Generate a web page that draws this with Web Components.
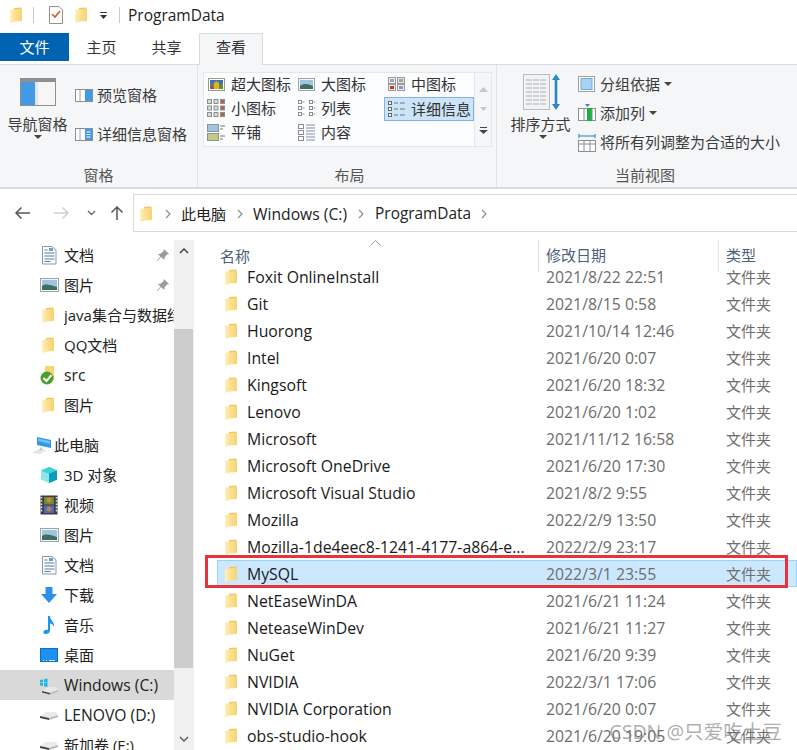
<!DOCTYPE html>
<html lang="zh"><head><meta charset="utf-8"><title>ProgramData</title>
<style>
html,body{margin:0;padding:0;height:750px;overflow:hidden;background:#fff;}
body{font:15px/20px "Open Sans","Noto Sans CJK SC",sans-serif;color:#1a1a1a;position:relative;display:flex;flex-direction:column;}
</style></head><body>
<x-titlebar>ProgramData</x-titlebar>
<x-tabs></x-tabs>
<x-ribbon></x-ribbon>
<x-address></x-address>
<x-body>
  <x-nav slot="nav">
    <x-nav-item icon="doc" pin>文档</x-nav-item>
    <x-nav-item icon="pic" pin>图片</x-nav-item>
    <x-nav-item icon="folder">java集合与数据结构</x-nav-item>
    <x-nav-item icon="folder">QQ文档</x-nav-item>
    <x-nav-item icon="src" latin>src</x-nav-item>
    <x-nav-item icon="folder" gap>图片</x-nav-item>
    <x-nav-item icon="pc" top>此电脑</x-nav-item>
    <x-nav-item icon="cube">3D 对象</x-nav-item>
    <x-nav-item icon="film">视频</x-nav-item>
    <x-nav-item icon="pic">图片</x-nav-item>
    <x-nav-item icon="doc">文档</x-nav-item>
    <x-nav-item icon="down">下载</x-nav-item>
    <x-nav-item icon="music">音乐</x-nav-item>
    <x-nav-item icon="desk">桌面</x-nav-item>
    <x-nav-item icon="winc" active latin>Windows (C:)</x-nav-item>
    <x-nav-item icon="disk" latin>LENOVO (D:)</x-nav-item>
    <x-nav-item icon="disk">新加卷 (E:)</x-nav-item>
  </x-nav>
  <x-list slot="list">
    <x-file date="2021/8/22 22:51">Foxit OnlineInstall</x-file>
    <x-file date="2021/8/15 0:58">Git</x-file>
    <x-file date="2021/10/14 12:46">Huorong</x-file>
    <x-file date="2021/6/20 0:07">Intel</x-file>
    <x-file date="2021/6/20 18:32">Kingsoft</x-file>
    <x-file date="2021/6/20 1:02">Lenovo</x-file>
    <x-file date="2021/11/12 16:58">Microsoft</x-file>
    <x-file date="2021/6/20 17:30">Microsoft OneDrive</x-file>
    <x-file date="2021/8/2 9:55">Microsoft Visual Studio</x-file>
    <x-file date="2022/2/9 13:50">Mozilla</x-file>
    <x-file date="2022/2/9 23:17">Mozilla-1de4eec8-1241-4177-a864-e...</x-file>
    <x-file date="2022/3/1 23:55" selected>MySQL</x-file>
    <x-file date="2021/6/21 11:24">NetEaseWinDA</x-file>
    <x-file date="2021/6/21 11:27">NeteaseWinDev</x-file>
    <x-file date="2021/6/20 9:39">NuGet</x-file>
    <x-file date="2022/3/1 17:06">NVIDIA</x-file>
    <x-file date="2021/6/20 0:07">NVIDIA Corporation</x-file>
    <x-file date="2021/6/20 19:05">obs-studio-hook</x-file>
  </x-list>
</x-body>
<x-watermark>CSDN @只爱吃土豆</x-watermark>
<script>
const grad='<defs><linearGradient id="f" x1="0" x2="1" y1="0" y2="0"><stop offset="0" stop-color="#fff2c4"/><stop offset=".3" stop-color="#fde49c"/><stop offset="1" stop-color="#f8d272"/></linearGradient></defs>';
const ICONS={
folder:[16,18,`${grad}<path d="M5 2 L12.500 1.500 V15 H5Z" fill="#f2c65e"/><path d="M1 3.500 H6 L8 3 H13 V15 L6 15.500 L1 17Z" fill="url(#f)"/>`],
doc:[18,20,`<path d="M2.5 1.5H12L16 5V19H2.5Z" fill="#fdfdfd" stroke="#8a99a8"/><path d="M4.5 5h3M4.5 8h10M4.5 11h10M4.5 14h10M4.5 16.5h6" stroke="#4f7ea8"/><rect x="9" y="3" width="4" height="3" fill="#6aa2cf"/>`],
pic:[19,14,`<rect x=".5" y=".5" width="18" height="13" fill="#f4f5f6" stroke="#9aa5ae"/><rect x="2" y="2" width="15" height="10" fill="#9fc4dd"/><path d="M2 8C6 5 10 7 17 9V12H2Z" fill="#3d6e5f"/>`],
src:[20,20,`<path d="M6 1h9v14H6Z" fill="#f8d574"/><circle cx="8" cy="13" r="6.5" fill="#4aa02c"/><path d="M4.5 13l3 3 5-6" fill="none" stroke="#fff" stroke-width="2"/>`],
pc:[22,20,`<path d="M7 2 L21 5 V13 L7 10Z" fill="#2e9be6"/><path d="M8 3.5L20 6V9L8 6Z" fill="#71c1f2"/><path d="M2 18 L9 14 L17 15 L10 19Z" fill="#e3e6e8"/><path d="M11 12l2 3h-4z" fill="#c3c9cd"/>`],
cube:[18,18,`<path d="M9 1 L17 4.5 V13.5 L9 17Z" fill="#0f9fb8"/><path d="M9 1 L1 4.5 V13.5 L9 17Z" fill="#8fe6e6"/><path d="M1 4.5 L9 1 L17 4.5 L9 8Z" fill="#3fd0d6"/><path d="M9 8V17L17 13.5V4.5Z" fill="#0c9bbd"/>`],
film:[18,20,`<rect x=".5" y=".5" width="17" height="19" fill="#3d3d3d"/><rect x="4" y="2" width="10" height="7.5" fill="#6c8a3f"/><rect x="4" y="10.5" width="10" height="7.5" fill="#4a68c7"/><circle cx="9" cy="5" r="2.5" fill="#d8862c"/><circle cx="9" cy="14" r="2.5" fill="#c0813a"/><path d="M1.5 2v16M16.5 2v16" stroke="#ddd" stroke-width="1.6" stroke-dasharray="1.6 1.6"/>`],
down:[18,18,`<path d="M5.5 1H12.5V8H17L9 17 1 8H5.5Z" fill="#2e8ee8"/>`],
music:[14,20,`<path d="M6 1H8C8.5 6 13 7 12 12 11 9 9.500 8.500 8 8.500V15.500C8 18 5.500 19 3.500 19 1.500 19 1 17.500 1.500 16.500 2.500 14.500 5 14.500 6 15Z" fill="#1b94ea"/>`],
desk:[18,14,`<rect x=".5" y=".5" width="17" height="13" fill="#1e90f0" stroke="#0f6ec4"/><path d="M3 12.500h1M6 12.500h1M9 12.500h6" stroke="#cfe7ff"/>`],
winc:[20,20,`<path d="M1 5l3-.5v3H1zM5 4.300L8.500 3.500v4H5zM1 8h3v3l-3-.5zM5 8h3.500v4L5 11.200z" fill="#1fb5e6"/><path d="M3 16 L9 12 H18 L19 15 L11 18Z" fill="#e6e8ea"/><path d="M3 16 L11 18 L11 19.500 L3 17.500Z" fill="#3f3f3f"/><path d="M11 18 L19 15 V16.500 L11 19.500Z" fill="#b5b8bb"/>`],
disk:[20,14,`<path d="M1 8 L7 4 H17 L19 7 L10 10Z" fill="#e8eaec"/><path d="M1 8 L10 10 V12 L1 10Z" fill="#444"/><path d="M10 10 L19 7 V9 L10 12Z" fill="#b5b8bb"/>`],
pane1:[36,28,`<rect x=".5" y=".5" width="35" height="27" fill="#f6f6f6" stroke="#8f8f8f"/><rect x="1" y="1" width="34" height="3" fill="#8f8f8f"/><rect x="1" y="4" width="14" height="23" fill="#429ae6"/><rect x="15" y="4" width="3" height="23" fill="#dfe8f1"/>`],
pane2:[18,13,`<rect x=".5" y=".5" width="17" height="12" fill="#fff" stroke="#8a8f94"/><rect x="10" y="1" width="7" height="11" fill="#429ae6"/><path d="M5 1v11" stroke="#9a9fa4"/>`],
pane3:[18,13,`<rect x=".5" y=".5" width="17" height="12" fill="#fff" stroke="#8a8f94"/><rect x="10" y="1" width="7" height="11" fill="#429ae6"/><path d="M5 1v11" stroke="#9a9fa4"/><path d="M11.500 4h4M11.500 6.500h4M11.500 9h4" stroke="#fff"/>`],
xl:[17,13,`<rect x=".5" y=".5" width="16" height="12" fill="#fff" stroke="#9a9a8a"/><rect x="2" y="2" width="13" height="9" fill="#5d8f3b"/><rect x="2" y="2" width="13" height="4" fill="#4a6fb0"/><path d="M6 11V5l2.500-2L11 5v6z" fill="#e0b21e"/><rect x="2" y="8" width="3" height="3" fill="#c23a7a"/>`],
lg:[17,13,`<rect x=".5" y=".5" width="16" height="12" fill="#f4f5f6" stroke="#9aa5ae"/><rect x="2" y="2" width="13" height="9" fill="#9fc4dd"/><path d="M2 8C6 5 10 6 15 8V11H2Z" fill="#3d6e5f"/>`],
md:[17,14,`<rect x=".5" y=".5" width="7" height="6" fill="#eee" stroke="#9a9a9a"/><rect x="9.500" y=".5" width="7" height="6" fill="#dfe6d8" stroke="#9a9a9a"/><rect x=".5" y="7.500" width="7" height="6" fill="#eee" stroke="#9a9a9a"/><rect x="9.500" y="7.500" width="7" height="6" fill="#eee" stroke="#9a9a9a"/><rect x="2" y="9" width="4" height="3" fill="#c9352a"/><rect x="11" y="9" width="4" height="3" fill="#8b93c9"/><rect x="2" y="2" width="4" height="3" fill="#9aa"/><rect x="11" y="2" width="4" height="3" fill="#9a8"/>`],
sm:[18,18,[0,6.5,13].flatMap(y=>[0,6.5,13].map(x=>`<rect x="${x+.5}" y="${y+.5}" width="4" height="4" fill="${x==13?'#b5654a':'#d5dbd0'}" stroke="#8d8d8d"/>`)).join('')],
list:[17,16,[0,6,12].flatMap(y=>[0,11].flatMap(x=>[`<rect x="${x+.5}" y="${y+.5}" width="3" height="3" fill="#fff" stroke="#8d8d8d"/>`,`<path d="M${x+4.500} ${y+2}h2" stroke="#8d8d8d"/>`])).join('')],
detail:[17,16,[0,6,12].map(y=>`<rect x=".5" y="${y+.5}" width="3" height="3" fill="#fff" stroke="#666"/><path d="M6 ${y+2}h4M12 ${y+2}h5" stroke="#777"/>`).join('')],
tile:[18,17,`<rect x=".5" y=".5" width="11" height="7" fill="#9fc4dd" stroke="#8d9499"/><rect x=".5" y="9.500" width="11" height="7" fill="#c7c78a" stroke="#8d9499"/><path d="M13 2h5M13 5h3M13 12h5M13 15h3" stroke="#777"/>`],
content:[17,17,[0,6,12].map(y=>`<rect x=".5" y="${y+.5}" width="5" height="4" fill="#fff" stroke="#8d8d8d"/><path d="M8 ${y+1}h9M8 ${y+4}h9" stroke="#7f8fb0"/>`).join('')],
group:[17,16,`<rect x=".5" y=".5" width="16" height="15" fill="#fff" stroke="#9a9fa4"/><rect x="3" y="2.500" width="11" height="11" fill="#a8d2f2" stroke="#6faad8"/>`],
addcol:[18,18,`<rect x=".5" y="4.500" width="17" height="12" fill="#fff" stroke="#8a8f94"/><rect x="9" y="4" width="5" height="13" fill="#17b13d"/><path d="M6 5v11M14 5v11" stroke="#8a8f94"/><path d="M9.500 0l2.500 3H7z" fill="#4a7fb5" transform="rotate(180 9.500 1.500)"/>`],
fit:[18,20,`<path d="M1 2v4M17 2v4M1 4h16" stroke="#1e7fd0"/><rect x=".5" y="8.500" width="17" height="11" fill="#fff" stroke="#8a8f94"/><path d="M1 12h16M6 9v10M12 9v10" stroke="#8a8f94"/>`],
sort:[38,36,`<rect x=".5" y=".5" width="26" height="35" fill="#f1f2f3" stroke="#b8bcc0"/><path d="M3 6h21M3 10h21M3 14h21M3 18h21M3 22h21M3 26h21M3 30h21" stroke="#aab2ba" stroke-dasharray="6 1"/><path d="M33 3V33" stroke="#2f86c9" stroke-width="2.600"/><path d="M33 0l4 6h-8zM33 36l-4-6h8z" fill="#2f86c9"/>`],
check:[14,18,`<path d="M.5.5H10L13.500 4V17.500H.5Z" fill="#fff" stroke="#9a8f86"/><path d="M3 8l3 3 5-6" fill="none" stroke="#cf5a2c" stroke-width="1.600"/>`],
pin:[14,14,`<path d="M8 1l5 5-2 .5-2.500 3-.2 2.500L5 9 1.500 13 1 12.500 4.500 8.500 2 6l2.500-.2 3-2.500z" fill="#9a9a9a"/>`],
};
class XIcon extends HTMLElement{connectedCallback(){const[w,h,s]=ICONS[this.getAttribute('name')];
 const r=this.shadowRoot||this.attachShadow({mode:'open'});
 r.innerHTML=`<style>:host{display:inline-flex;flex:none;width:${w}px;height:${h}px}svg{display:block}</style><svg width="${w}" height="${h}" viewBox="0 0 ${w} ${h}">${s}</svg>`;}}
customElements.define('x-icon',XIcon);
const def=(n,html)=>customElements.define(n,class extends HTMLElement{connectedCallback(){if(this.shadowRoot)return;const r=this.attachShadow({mode:'open'});r.innerHTML=typeof html=='function'?html(this):html;}});
const caret=`<svg width="8" height="4" viewBox="0 0 8 4" style="display:block"><path d="M0 0h8L4 4z" fill="#444"/></svg>`;
function chev(){return `<svg width="6" height="10" viewBox="0 0 6 10"><path d="M1 1l4 4-4 4" fill="none" stroke="#888" stroke-width="1.100"/></svg>`}
def('x-titlebar',`<style>:host{display:flex;align-items:center;height:33px;flex:none;color:#222;box-sizing:border-box;padding-bottom:3px;font-size:15.5px}
.s{width:1px;height:16px;background:#c9c9c9}</style>
<x-icon name="folder" style="margin-left:9px"></x-icon><span class="s" style="margin-left:8px"></span>
<x-icon name="check" style="margin-left:15px"></x-icon><x-icon name="folder" style="margin-left:11px"></x-icon>
<span style="margin-left:10px;display:flex;flex-direction:column;gap:2px;align-items:center"><i style="width:7px;height:1px;background:#333;display:block"></i><svg width="7" height="4" viewBox="0 0 7 4" style="display:block"><path d="M0 0h7L3.500 4z" fill="#333"/></svg></span>
<span class="s" style="margin-left:12px"></span><span style="margin-left:8px"><slot></slot></span>`);
def('x-tabs',`<style>:host{display:flex;height:32px;flex:none;box-sizing:border-box;border-bottom:1px solid #dadbdc}
div{width:65px;height:31px;text-align:center;line-height:28px;color:#333;box-sizing:border-box}
.f{width:69px;height:28px;background:#0063b1;color:#fff}
.a{width:64px;height:32px;background:#f5f6f7;border:1px solid #dadbdc;border-bottom:0;line-height:27px}</style>
<div class="f">文件</div><div>主页</div><div>共享</div><div class="a">查看</div>`);
def('x-ribbon',`<style>:host{display:flex;height:124px;flex:none;background:#f5f6f7;border-bottom:2px solid #dadbdc;box-sizing:border-box;color:#3a3a3a;font-size:15px}
.g{display:flex;flex-direction:column;border-right:1px solid #e2e3e4;box-sizing:border-box;flex:none}
.c{flex:1;display:flex;min-height:0}
.l{height:24px;text-align:center;line-height:24px;color:#555}
.big{display:flex;flex-direction:column;align-items:center;flex:none}
.big span{white-space:nowrap}
.big svg{margin-top:1px}
.col{display:flex;flex-direction:column}
.it{display:flex;align-items:center;white-space:nowrap;gap:4px}
.gal{margin:7px 0 0 5px;width:272px;height:75px;background:#fbfcfe;border:1px solid #e6e7e8;box-sizing:border-box;display:grid;grid-template-columns:90px 90px 90px;grid-template-rows:24px 24px 24px;color:#333}
.gi{display:flex;align-items:center;gap:6px;padding-left:3px;padding-bottom:2px;white-space:nowrap;box-sizing:border-box}
.gi x-icon{width:18px;justify-content:center;align-self:center}
.sel{background:#cce4f7;border:1px solid #84b4dd;width:90px;padding-left:2px;padding-bottom:1px}
.sb{margin-top:7px;width:17px;height:75px;background:#f5f6f7;border:1px solid #e6e7e8;border-left:0;box-sizing:border-box;display:flex;flex-direction:column;align-items:center;justify-content:space-around;padding:6px 0 4px}
</style>
<div class="g" style="width:198px"><div class="c">
 <div class="big" style="width:75px;padding-top:13px;box-sizing:border-box"><x-icon name="pane1"></x-icon><span style="margin-top:8px">导航窗格</span>${caret}</div>
 <div class="col" style="padding-top:20px;gap:19px"><div class="it"><x-icon name="pane2"></x-icon>预览窗格</div><div class="it"><x-icon name="pane3"></x-icon>详细信息窗格</div></div>
</div><div class="l">窗格</div></div>
<div class="g" style="width:299px"><div class="c">
 <div class="gal">
  <div class="gi"><x-icon name="xl"></x-icon>超大图标</div><div class="gi"><x-icon name="lg"></x-icon>大图标</div><div class="gi"><x-icon name="md"></x-icon>中图标</div>
  <div class="gi"><x-icon name="sm"></x-icon>小图标</div><div class="gi"><x-icon name="list"></x-icon>列表</div><div class="gi sel"><x-icon name="detail"></x-icon>详细信息</div>
  <div class="gi"><x-icon name="tile"></x-icon>平铺</div><div class="gi"><x-icon name="content"></x-icon>内容</div><div></div>
 </div>
 <div class="sb"><svg width="9" height="5"><path d="M0 5h9L4.500 0z" fill="#c4c8cc"/></svg><svg width="7" height="4"><path d="M0 0h7L3.500 4z" fill="#c4c8cc"/></svg><svg width="9" height="7"><path d="M1 0h7v1H1zM0 3h9L4.500 7z" fill="#3a4a5a"/></svg></div>
</div><div class="l" style="padding-left:5px">布局</div></div>
<div class="g" style="flex:1;border-right:0"><div class="c">
 <div class="big" style="width:75px;margin-left:6px;padding-top:9px;box-sizing:border-box"><x-icon name="sort" style="margin-left:2px"></x-icon><span style="margin-top:4px">排序方式</span><svg width="8" height="4" viewBox="0 0 8 4" style="display:block;margin-left:4px"><path d="M0 0h8L4 4z" fill="#444"/></svg></div>
 <div class="col" style="padding-top:9px;gap:9px">
  <div class="it"><x-icon name="group" style="margin-right:1px"></x-icon>分组依据 ${caret}</div>
  <div class="it"><x-icon name="addcol"></x-icon>添加列 ${caret}</div>
  <div class="it"><x-icon name="fit"></x-icon>将所有列调整为合适的大小</div>
 </div>
</div><div class="l" style="margin-right:4px">当前视图</div></div>`);
def('x-address',`<style>:host{display:flex;height:51px;flex:none;align-items:flex-start;padding-top:5px;box-sizing:border-box;color:#222}
.n{display:flex;align-items:center;height:38px;width:133px;flex:none}
.box{flex:1;height:38px;border:1px solid #d9d9d9;border-right:0;display:flex;align-items:center;padding:1px 0 0 5px;box-sizing:border-box}
.c{display:flex;justify-content:center;flex:none}
.l{font-size:15.7px}
</style><div class="n">
<svg width="17" height="14" style="margin-left:14px" viewBox="0 0 17 14"><path d="M16 7H2M7.500 1.500 2 7l5.500 5.500" fill="none" stroke="#555" stroke-width="1.500"/></svg>
<svg width="17" height="14" style="margin-left:22px" viewBox="0 0 17 14"><path d="M1 7h14M9.500 1.500 15 7l-5.500 5.500" fill="none" stroke="#d0d0d0" stroke-width="1.500"/></svg>
<svg width="9" height="6" style="margin-left:17px" viewBox="0 0 9 6"><path d="M1 1l3.500 3.500L8 1" fill="none" stroke="#666" stroke-width="1.300"/></svg>
<svg width="14" height="16" style="margin-left:14px" viewBox="0 0 14 16"><path d="M7 15V2M1.500 7.500 7 2l5.500 5.500" fill="none" stroke="#555" stroke-width="1.500"/></svg></div>
<div class="box"><x-icon name="folder"></x-icon><span class="c" style="width:26px">${chev()}</span><span>此电脑</span><span class="c" style="width:27px">${chev()}</span><span class="l">Windows (C:)</span><span class="c" style="width:28px">${chev()}</span><span style="font-size:15.4px">ProgramData</span><span class="c" style="width:26px">${chev()}</span></div>`);
def('x-body',`<style>:host{display:flex;flex:1;min-height:0;overflow:hidden}</style><slot name="nav"></slot><slot name="list"></slot>`);
def('x-nav',`<style>:host{display:flex;width:194px;flex:none;height:510px;overflow:hidden;border-right:1px solid #f0f0f0;box-sizing:border-box}
.t{width:174px;flex:none;overflow:hidden}
.sb{width:19px;flex:none;background:#f0f0f0;display:flex;flex-direction:column;align-items:center}
.u{height:21px;display:flex;align-items:center;justify-content:center}
.th{width:19px;height:339px;background:#cdcdcd;margin-top:68px}
.d{margin-top:auto;height:22px;display:flex;align-items:center}
</style><div class="t"><slot></slot></div><div class="sb"><div class="u"><svg width="10" height="6" viewBox="0 0 10 6"><path d="M1 5l4-4 4 4" fill="none" stroke="#333" stroke-width="1.300"/></svg></div><div class="th"></div><div class="d"><svg width="10" height="6" viewBox="0 0 10 6"><path d="M1 1l4 4 4-4" fill="none" stroke="#555" stroke-width="1.300"/></svg></div></div>`);
def('x-nav-item',e=>{const top=e.hasAttribute('top');const nm=e.getAttribute('icon');
 return `<style>:host{display:flex;align-items:center;height:30px;white-space:nowrap;color:#222;${e.hasAttribute('latin')?'font-size:15.7px;':''}${e.hasAttribute('active')?'background:#d9d9d9;':''}${e.hasAttribute('gap')?'margin-bottom:10px;':''}overflow:hidden}
.ic{width:${top?22:20}px;margin-left:${top?30:39}px;display:flex;justify-content:center;flex:none}
.tx{margin-left:${top?2:5}px;flex:1;overflow:hidden}
.p{flex:none;margin:0 4px;display:flex}</style><span class="ic"><x-icon name="${nm}"></x-icon></span><span class="tx"><slot></slot></span>${e.hasAttribute('pin')?'<span class="p"><x-icon name="pin"></x-icon></span>':''}`});
def('x-list',`<style>:host{display:block;flex:1;min-width:0;height:510px;overflow:hidden}
.h{display:flex;height:24px;color:#4c607a;margin-bottom:-1px}
.n{width:344px;padding-left:26px;box-sizing:border-box;display:flex;flex-direction:column;line-height:20px}
.a{height:7px;display:flex;justify-content:center;padding-right:8px;align-items:center}
.dv{width:1px;height:32px;background:#e5e5e5;flex:none}
.d{width:179px;padding:5px 0 0 7px;box-sizing:border-box}
.t{padding:5px 0 0 7px}
</style><div class="h"><div class="n"><span class="a"><svg width="11" height="6" viewBox="0 0 11 6"><path d="M.5 5.500l5-5 5 5" fill="none" stroke="#999"/></svg></span><span>名称</span></div><span class="dv"></span><div class="d">修改日期</div><span class="dv"></span><div class="t">类型</div></div><slot></slot>`);
def('x-file',e=>{const sel=e.hasAttribute('selected');return `<style>:host{display:block;height:27px;position:relative;color:#1a1a1a}
.r{display:flex;align-items:center;height:27px;margin-left:${sel?23:0}px;${sel?'background:#cce8ff;box-shadow:inset 0 0 0 1px #99d1ff;':''}}
.ic{margin-left:${sel?7:30}px;width:17px;flex:none;display:flex}
.n{width:287px;margin-left:6px;white-space:nowrap;overflow:hidden;flex:none;font-size:15.8px}
.d{width:180px;margin-left:12px;color:#6d6d6d;flex:none;white-space:nowrap;font-size:15.8px}
.t{color:#6d6d6d;white-space:nowrap}
.mark{position:absolute;left:11px;top:-5px;width:583px;height:33px;border:3px solid #e5343d;box-sizing:border-box;pointer-events:none}
</style><div class="r"><span class="ic"><x-icon name="folder"></x-icon></span><span class="n"><slot></slot></span><span class="d">${e.getAttribute('date')}</span><span class="t">文件夹</span></div>${sel?'<div class="mark"></div>':''}`});
def('x-watermark',`<style>:host{position:absolute;right:15px;bottom:6px;font-size:19.600px;line-height:24px;color:rgba(120,120,120,.6);white-space:nowrap}</style><slot></slot>`);
</script>
</body></html>
